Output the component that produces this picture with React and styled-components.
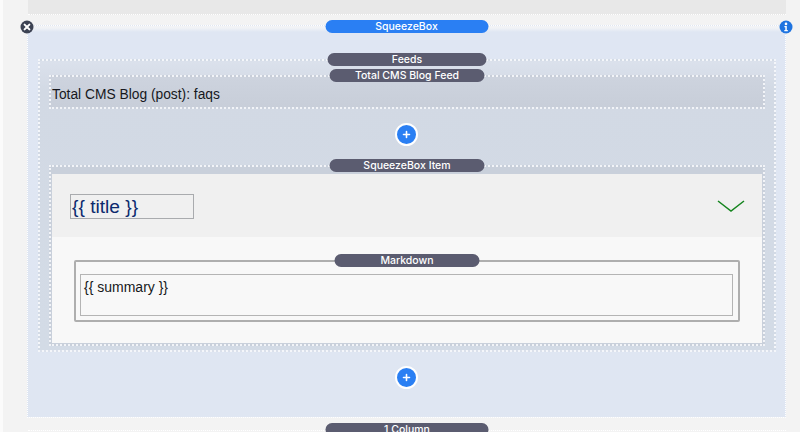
import React from "react";
import styled, { createGlobalStyle } from "styled-components";

const Global = createGlobalStyle`
  html, body { margin: 0; height: 432px; overflow: hidden; background: #f4f4f4; }
  * { box-sizing: border-box; }
  body { font-family: "Liberation Sans", Arial, sans-serif; }
`;

const Page = styled.div`
  width: 800px;
  height: 432px;
  overflow: hidden;
  padding-left: 27px;
  padding-right: 14px;
  background: linear-gradient(90deg, #fbfbfb 0, #fbfbfb 3px, #f3f3f3 3px);
`;

const TopBand = styled.div`
  height: 15px;
  margin-left: 1px;
  background: #e8e8e8;
  border-bottom: 1px dotted #ffffff;
`;

const Section = styled.section`
  position: relative;
  margin-top: 10px;
  height: 393px;
  padding: 33px 9px 0 10px;
  border: 1px dotted #ffffff;
  background: linear-gradient(#f3f4f5 0, #f1f3f6 2px, #dfe6f3 6px, #dfe6f2 100%);
`;

const Pill = styled.div`
  position: absolute;
  left: 50%;
  top: ${(p) => p.$top}px;
  width: ${(p) => p.$width}px;
  height: 13px;
  transform: translateX(-50%);
  border-radius: 7px;
  background: ${(p) => (p.$blue ? "#2a7ff3" : "#5b5c70")};
  color: #ffffff;
  font-family: Inter, "Liberation Sans", sans-serif;
  font-size: 10.5px;
  font-weight: 500;
  line-height: 13px;
  text-align: center;
  white-space: nowrap;
`;

const CornerIcon = styled.svg`
  position: absolute;
  top: -6px;
  ${(p) => (p.$right ? "right: -8px;" : "left: -8px;")}
  width: 14px;
  height: 14px;
`;

const Feeds = styled.div`
  position: relative;
  height: 293px;
  padding: 14px 9px 0 9px;
  border: 2px dotted #f4f6fa;
  background: linear-gradient(#dbe1ec 0, #d2d9e4 30px, #d3dbe6 100%);
`;

const FeedBox = styled.div`
  position: relative;
  height: 34px;
  padding: 8px 0 0 1px;
  border: 2px dotted #f2f4f8;
  background: linear-gradient(#cdd3de, #c8ced9);
  color: #16181d;
  font-size: 13.8px;
  line-height: 20px;
`;

const AddRow = styled.div`
  display: flex;
  justify-content: center;
  padding-right: 1px;
  margin-top: ${(p) => p.$top}px;
  margin-bottom: ${(p) => p.$bottom}px;
`;

const AddButton = styled.div`
  display: flex;
  align-items: center;
  justify-content: center;
  width: 23px;
  height: 23px;
  border-radius: 50%;
  border: 2px solid #ffffff;
  background: #2a7ff3;
`;

const ItemBox = styled.div`
  position: relative;
  height: 181px;
  padding: 7px 1px 1px 1px;
  border: 2px dotted #f2f4f8;
  background: #c9d0db;
`;

const ItemCard = styled.div`
  height: 169px;
  background: #f8f8f8;
`;

const ItemHeader = styled.div`
  display: flex;
  align-items: center;
  justify-content: space-between;
  height: 63px;
  padding: 2px 17px 0 18px;
  background: #f0f0f0;
`;

const TitleField = styled.div`
  width: 124px;
  height: 25px;
  padding-left: 1px;
  border: 1px solid #a9abae;
  color: #0c2a6e;
  font-size: 19.2px;
  line-height: 23px;
`;

const MarkdownBox = styled.div`
  position: relative;
  height: 62px;
  margin: 23px 22px 0;
  padding: 12px 5px 4px 4px;
  border: 2px solid #aeaeae;
  border-radius: 2px;
`;

const SummaryField = styled.div`
  height: 42px;
  padding: 3px 0 0 3px;
  border: 1px solid #b4b4b4;
  color: #17181a;
  font-size: 14px;
  line-height: 18px;
`;

const NextSection = styled.div`
  position: relative;
  margin-top: 12px;
  height: 20px;
  margin-left: 1px;
  border-top: 1px dotted #ffffff;
`;

const Plus = () => (
  <svg width="9" height="9" viewBox="0 0 9 9">
    <path d="M4.5 1.5v6M1.5 4.5h6" stroke="#fff" strokeWidth="1.6" strokeLinecap="round" />
  </svg>
);

export default function App() {
  return (
    <Page>
      <Global />
      <TopBand />
      <Section>
        <Pill $blue $top={-6} $width={163}>SqueezeBox</Pill>
        <CornerIcon viewBox="0 0 14 14">
          <circle cx="7" cy="7" r="6.5" fill="#3d4353" />
          <path d="M4.6 4.6l4.8 4.8M9.4 4.6l-4.8 4.8" stroke="#fff" strokeWidth="2" strokeLinecap="round" />
        </CornerIcon>
        <CornerIcon $right viewBox="0 0 14 14">
          <circle cx="7" cy="7" r="6.5" fill="#1f74e0" />
          <circle cx="7" cy="3.9" r="1.3" fill="#fff" />
          <path d="M5.4 6h2.4v4h1v1.2H5.3V10h1V7.2h-.9z" fill="#fff" />
        </CornerIcon>
        <Feeds>
          <Pill $top={-8} $width={159}>Feeds</Pill>
          <FeedBox>
            <Pill $top={-8} $width={155}>Total CMS Blog Feed</Pill>
            Total CMS Blog (post): faqs
          </FeedBox>
          <AddRow $top={14} $bottom={19}>
            <AddButton><Plus /></AddButton>
          </AddRow>
          <ItemBox>
            <Pill $top={-8} $width={155}>SqueezeBox Item</Pill>
            <ItemCard>
              <ItemHeader>
                <TitleField>{"{{ title }}"}</TitleField>
                <svg width="28" height="13" viewBox="0 0 28 13">
                  <path d="M1 1l13 10L27 1" fill="none" stroke="#15851f" strokeWidth="1.5" />
                </svg>
              </ItemHeader>
              <MarkdownBox>
                <Pill $top={-8} $width={145}>Markdown</Pill>
                <SummaryField>{"{{ summary }}"}</SummaryField>
              </MarkdownBox>
            </ItemCard>
          </ItemBox>
        </Feeds>
        <AddRow $top={14} $bottom={0}>
          <AddButton><Plus /></AddButton>
        </AddRow>
      </Section>
      <NextSection>
        <Pill $top={-8} $width={163}>1 Column</Pill>
      </NextSection>
    </Page>
  );
}
